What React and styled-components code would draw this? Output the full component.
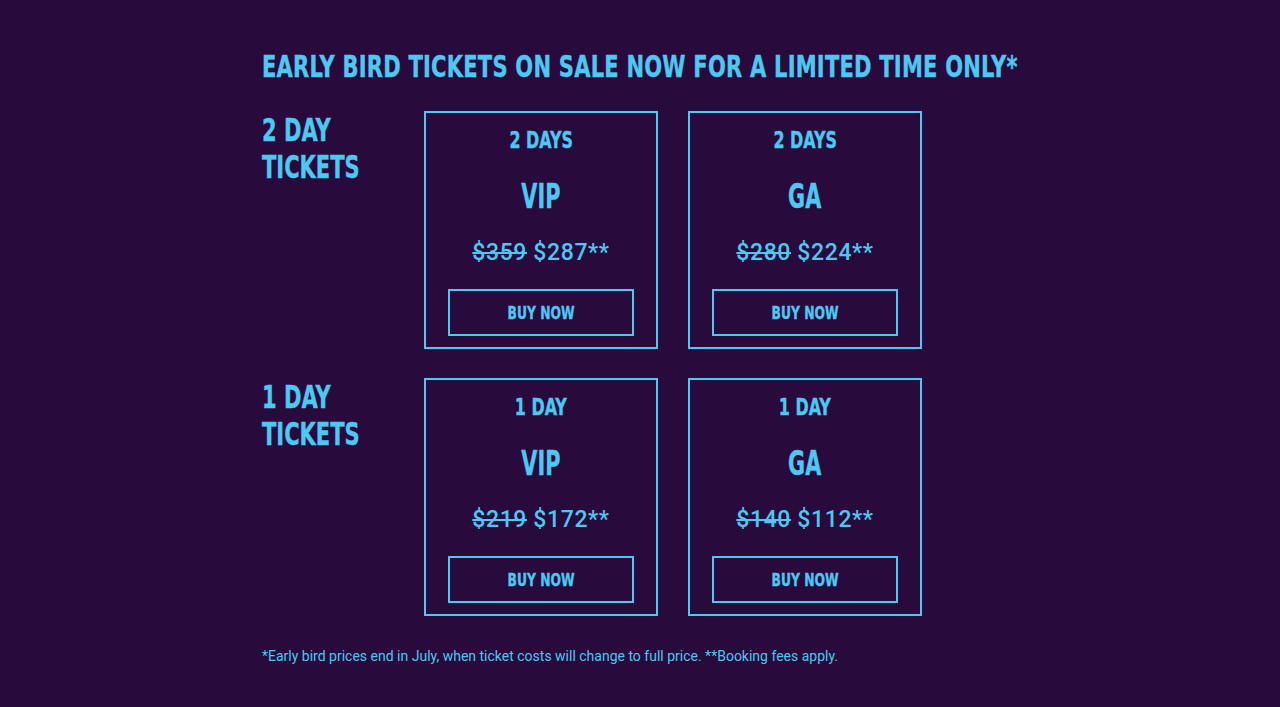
import styled, { createGlobalStyle } from 'styled-components'

const GlobalStyle = createGlobalStyle`
  html, body {
    margin: 0;
    padding: 0;
    background: #280a3d;
  }
`

// no narrow display face installed, so condensed DejaVu gets squeezed a bit more
const display = `"DejaVu Sans Condensed", "Liberation Sans", sans-serif`

const groups = [
  {
    label: ['2 DAY', 'TICKETS'],
    tickets: [
      { days: '2 DAYS', kind: 'VIP', was: '$359', now: '$287**' },
      { days: '2 DAYS', kind: 'GA', was: '$280', now: '$224**' },
    ],
  },
  {
    label: ['1 DAY', 'TICKETS'],
    tickets: [
      { days: '1 DAY', kind: 'VIP', was: '$219', now: '$172**' },
      { days: '1 DAY', kind: 'GA', was: '$140', now: '$112**' },
    ],
  },
]

const App = () => {
  return (
    <>
      <GlobalStyle />
      <Page>
        <Wrapper>
          <Heading>
            <Squeeze $scale={0.754}>Early bird tickets on sale now for a limited time only*</Squeeze>
          </Heading>
          <Groups>
            {groups.map((group) => (
              <Group key={group.label[0]}>
                <Label>
                  {group.label.map((line) => (
                    <div key={line}>
                      <Squeeze $scale={0.73}>{line}</Squeeze>
                    </div>
                  ))}
                </Label>
                <Cards>
                  {group.tickets.map((t) => (
                    <Card key={t.days + t.kind}>
                      <Days>
                        <Squeeze $scale={0.77} $center>{t.days}</Squeeze>
                      </Days>
                      <Kind>
                        <Squeeze $scale={0.7} $center>{t.kind}</Squeeze>
                      </Kind>
                      <Price>
                        <Was>{t.was}</Was> {t.now}
                      </Price>
                      <BuyButton>
                        <Squeeze $scale={0.76} $center>Buy now</Squeeze>
                      </BuyButton>
                    </Card>
                  ))}
                </Cards>
              </Group>
            ))}
          </Groups>
          <Note>*Early bird prices end in July, when ticket costs will change to full price. **Booking fees apply.</Note>
        </Wrapper>
      </Page>
    </>
  )
}

export default App

const Page = styled.div`
  min-height: 707px;
  padding-top: 48px;
  box-sizing: border-box;
  color: #4dc8f0;
`
const Wrapper = styled.div`
  width: 756px;
  margin: 0 auto;
`
const Squeeze = styled.span`
  display: inline-block;
  white-space: nowrap;
  transform: scaleX(${(p) => p.$scale});
  transform-origin: ${(p) => (p.$center ? 'center' : 'left')};
  -webkit-text-stroke: 0.4px currentColor;
`
const Heading = styled.h1`
  margin: 0;
  font-family: ${display};
  font-weight: 700;
  font-size: 31px;
  line-height: 36px;
  text-transform: uppercase;
  letter-spacing: 0.3px;
  white-space: nowrap;
`
const Groups = styled.div`
  display: flex;
  flex-direction: column;
  gap: 29px;
  margin-top: 27px;
`
const Group = styled.div`
  display: flex;
`
const Label = styled.div`
  width: 162px;
  font-family: ${display};
  font-weight: 700;
  font-size: 32px;
  line-height: 37px;
  padding-top: 1px;
`
const Cards = styled.div`
  display: flex;
  gap: 30px;
`
const Card = styled.div`
  width: 234px;
  height: 238px;
  border: 2px solid #4dc8f0;
  box-sizing: border-box;
  display: flex;
  flex-direction: column;
  align-items: center;
  padding: 14px 22px 11px;
`
const Days = styled.div`
  font-family: ${display};
  font-weight: 700;
  font-size: 23px;
  line-height: 26px;
`
const Kind = styled.div`
  font-family: ${display};
  font-weight: 700;
  font-size: 33px;
  line-height: 36px;
  margin-top: 26px;
`
const Price = styled.div`
  font-family: Roboto, "Liberation Sans", sans-serif;
  font-weight: 500;
  font-size: 23px;
  line-height: 26px;
  letter-spacing: 0.6px;
  margin-top: 25px;
`
const Was = styled.s`
  text-decoration-thickness: 2px;
`
const BuyButton = styled.button`
  margin-top: auto;
  width: 100%;
  height: 47px;
  padding: 0;
  background: transparent;
  border: 2px solid #4dc8f0;
  color: #4dc8f0;
  font-family: ${display};
  font-weight: 700;
  font-size: 18px;
  text-transform: uppercase;
  cursor: pointer;
`
const Note = styled.p`
  margin: 31px 0 0;
  font-family: Roboto, "Liberation Sans", sans-serif;
  font-size: 14px;
  line-height: 18px;
`
